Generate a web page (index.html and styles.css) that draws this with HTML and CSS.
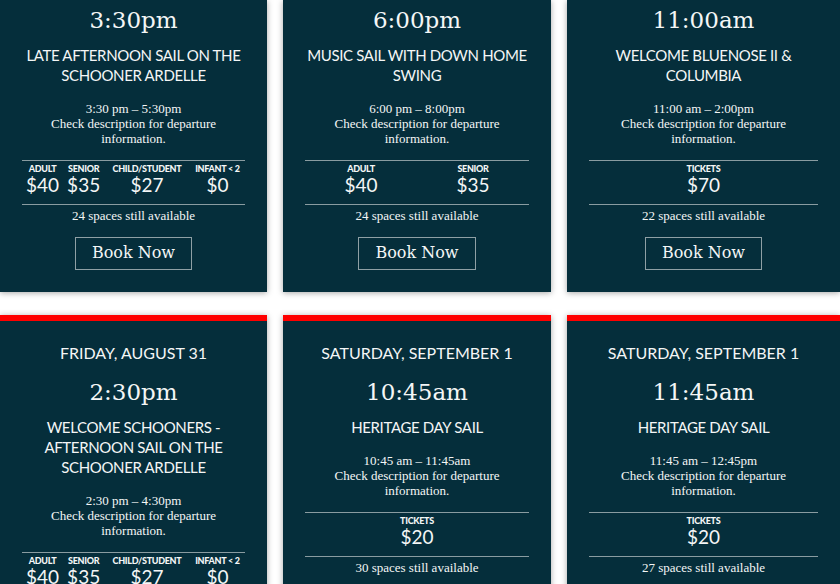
FILE: index.html
```html
<!DOCTYPE html>
<html lang="en">
<head>
<meta charset="utf-8">
<title>Sailings</title>
<link rel="stylesheet" href="styles.css">
</head>
<body>
<main class="grid">
  <article class="card card--cont">
    <div class="time">3:30pm</div>
    <h3 class="title">LATE AFTERNOON SAIL ON THE SCHOONER ARDELLE</h3>
    <p class="info">3:30 pm – 5:30pm<br>Check description for departure information.</p>
    <div class="prices">
      <table>
        <tr><th>Adult</th><th>Senior</th><th>Child/Student</th><th>Infant &lt; 2</th></tr>
        <tr><td>$40</td><td>$35</td><td>$27</td><td>$0</td></tr>
      </table>
    </div>
    <p class="avail">24 spaces still available</p>
    <a class="book" href="#">Book Now</a>
  </article>

  <article class="card card--cont">
    <div class="time">6:00pm</div>
    <h3 class="title">MUSIC SAIL WITH DOWN HOME SWING</h3>
    <p class="info">6:00 pm – 8:00pm<br>Check description for departure information.</p>
    <div class="prices">
      <table>
        <tr><th>Adult</th><th>Senior</th></tr>
        <tr><td>$40</td><td>$35</td></tr>
      </table>
    </div>
    <p class="avail">24 spaces still available</p>
    <a class="book" href="#">Book Now</a>
  </article>

  <article class="card card--cont">
    <div class="time">11:00am</div>
    <h3 class="title">WELCOME BLUENOSE II &amp; COLUMBIA</h3>
    <p class="info">11:00 am – 2:00pm<br>Check description for departure information.</p>
    <div class="prices">
      <table>
        <tr><th>Tickets</th></tr>
        <tr><td>$70</td></tr>
      </table>
    </div>
    <p class="avail">22 spaces still available</p>
    <a class="book" href="#">Book Now</a>
  </article>

  <article class="card card--day">
    <div class="date">FRIDAY, AUGUST 31</div>
    <div class="time">2:30pm</div>
    <h3 class="title">WELCOME SCHOONERS - AFTERNOON SAIL ON THE SCHOONER ARDELLE</h3>
    <p class="info">2:30 pm – 4:30pm<br>Check description for departure information.</p>
    <div class="prices">
      <table>
        <tr><th>Adult</th><th>Senior</th><th>Child/Student</th><th>Infant &lt; 2</th></tr>
        <tr><td>$40</td><td>$35</td><td>$27</td><td>$0</td></tr>
      </table>
    </div>
    <p class="avail">24 spaces still available</p>
    <a class="book" href="#">Book Now</a>
  </article>

  <article class="card card--day">
    <div class="date">SATURDAY, SEPTEMBER 1</div>
    <div class="time">10:45am</div>
    <h3 class="title">HERITAGE DAY SAIL</h3>
    <p class="info">10:45 am – 11:45am<br>Check description for departure information.</p>
    <div class="prices">
      <table>
        <tr><th>Tickets</th></tr>
        <tr><td>$20</td></tr>
      </table>
    </div>
    <p class="avail">30 spaces still available</p>
    <a class="book" href="#">Book Now</a>
  </article>

  <article class="card card--day">
    <div class="date">SATURDAY, SEPTEMBER 1</div>
    <div class="time">11:45am</div>
    <h3 class="title">HERITAGE DAY SAIL</h3>
    <p class="info">11:45 am – 12:45pm<br>Check description for departure information.</p>
    <div class="prices">
      <table>
        <tr><th>Tickets</th></tr>
        <tr><td>$20</td></tr>
      </table>
    </div>
    <p class="avail">27 spaces still available</p>
    <a class="book" href="#">Book Now</a>
  </article>
</main>
</body>
</html>
```
FILE: styles.css
```css
html, body {
  margin: 0;
  padding: 0;
  background: #ffffff;
}

body {
  font-family: "Liberation Serif", serif;
  color: #f4f6f6;
}

.grid {
  display: grid;
  grid-template-columns: 267px 268px 273px;
  column-gap: 16px;
  row-gap: 23px;
}

.card {
  background: #052e3b;
  box-shadow: 0 1px 6px rgba(0, 0, 0, 0.35);
  padding: 5px 22px 22px;
  display: flex;
  flex-direction: column;
  align-items: stretch;
  text-align: center;
}

.card--day {
  border-top: 6px solid #ff0000;
  padding-top: 22px;
}

.date {
  font-family: Lato, sans-serif;
  font-size: 16px;
  line-height: 20px;
  margin-bottom: 14px;
}

.time {
  font-family: "DejaVu Serif", serif;
  font-size: 23px;
  line-height: 30px;
}

.title {
  font-family: Lato, sans-serif;
  font-weight: 400;
  font-size: 15px;
  line-height: 20px;
  letter-spacing: -0.35px;
  margin: 10px -4px 0;
}

.info {
  font-size: 13px;
  line-height: 15px;
  margin: 16px 0 14px;
}

.prices {
  border-top: 1px solid #8a9ca1;
  border-bottom: 1px solid #8a9ca1;
  padding: 2px 0 8px;
}

.prices table {
  width: 100%;
  border-collapse: collapse;
}

.prices th {
  font-family: Lato, sans-serif;
  font-weight: 900;
  font-size: 9px;
  line-height: 11px;
  text-transform: uppercase;
  letter-spacing: -0.3px;
  padding: 0;
}

.prices td {
  font-family: Lato, sans-serif;
  font-size: 19px;
  line-height: 22px;
  padding: 0;
}

.avail {
  font-size: 13px;
  line-height: 15px;
  font-weight: 400;
  margin: 3px 0 14px;
}

.book {
  align-self: center;
  font-family: "DejaVu Serif", serif;
  font-size: 16px;
  line-height: 20px;
  color: #f4f6f6;
  text-decoration: none;
  border: 1px solid #8fa0a5;
  padding: 5px 16px 6px;
}
```
